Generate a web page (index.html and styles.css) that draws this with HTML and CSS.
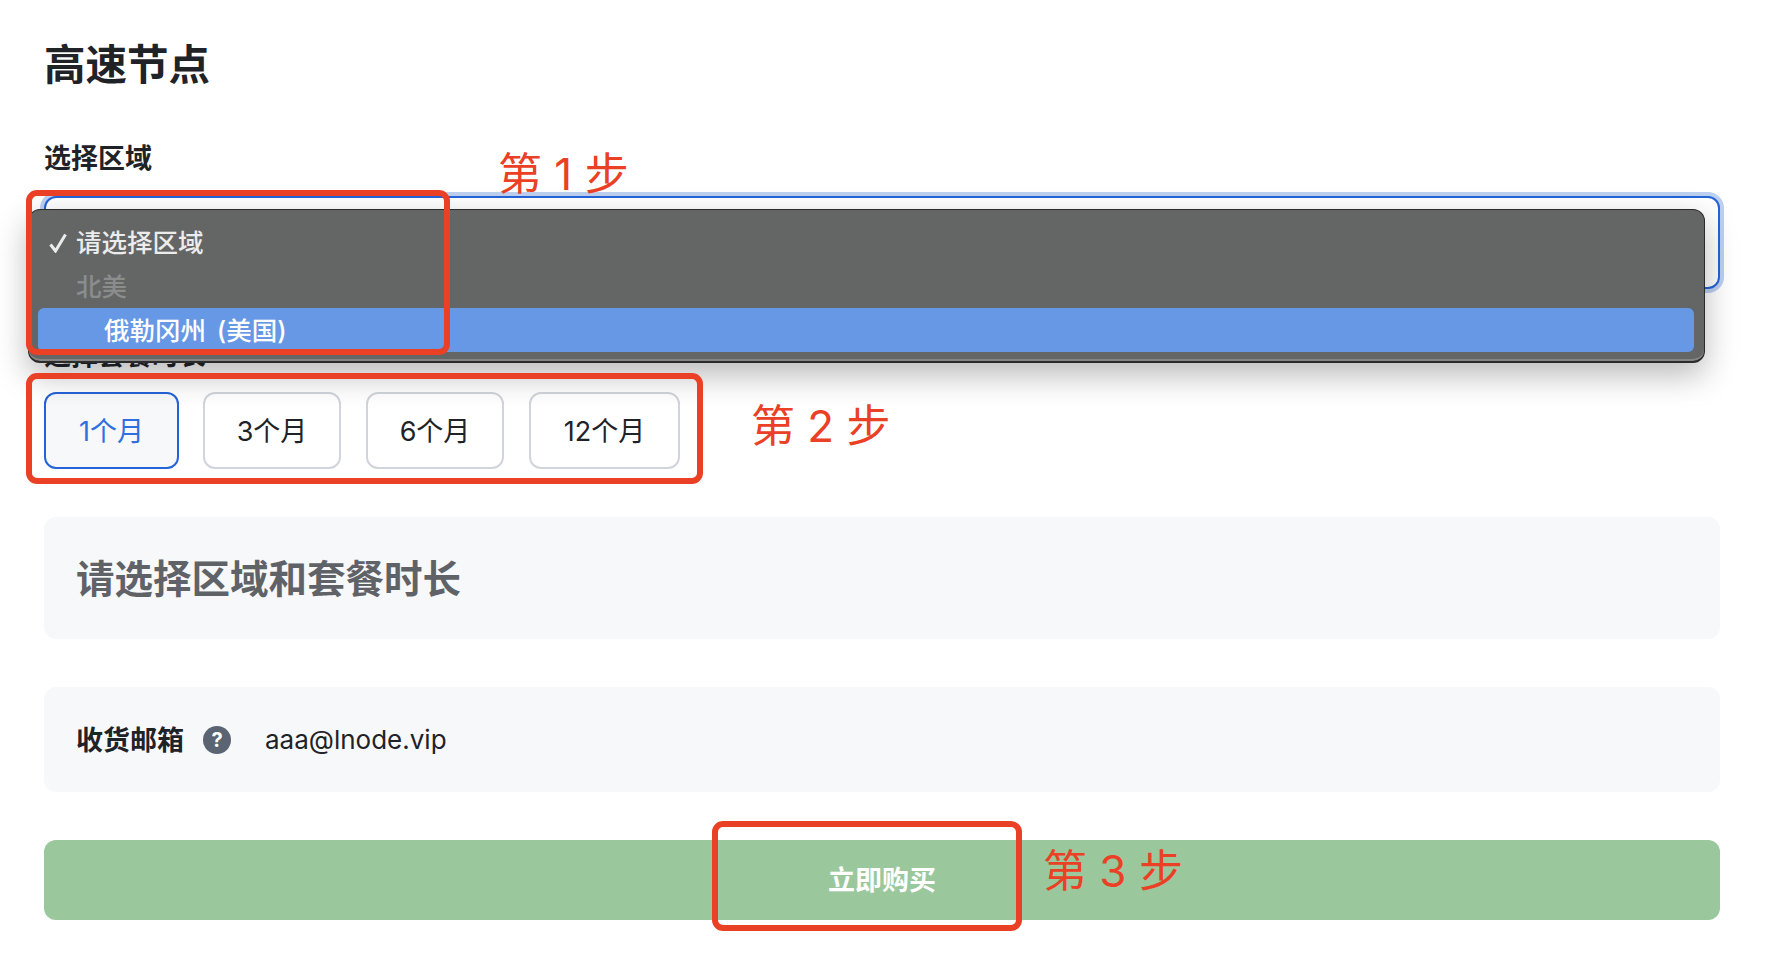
FILE: index.html
```html
<!DOCTYPE html>
<html lang="zh-CN">
<head>
  <meta charset="UTF-8" />
  <title>高速节点</title>
  <link rel="stylesheet" href="styles.css">
</head>
<body>

<main class="page">
  <h1 class="title">高速节点</h1>

  <div class="field-label">选择区域</div>
  <div class="select-box"></div>

  <div class="field-label field-label-plan">选择套餐时长</div>
  <div class="plans">
    <button class="plan plan-active plan-1">1个月</button>
    <button class="plan plan-3">3个月</button>
    <button class="plan plan-6">6个月</button>
    <button class="plan plan-12">12个月</button>
  </div>

  <div class="price-box">请选择区域和套餐时长</div>

  <div class="email-box">
    <span class="email-label">收货邮箱</span>
    <span class="help-icon">?</span>
    <span class="email-value">aaa@lnode.vip</span>
  </div>

  <button class="btn-buy">立即购买</button>
</main>

<!-- menu aberto do select -->
<div class="select-menu">
  <div class="menu-row menu-checked">
    <svg class="menu-check" viewBox="0 0 18 20" width="18" height="20"><path d="M1.5 11.5 L6.5 18 L16.5 1.5" fill="none" stroke="#ececec" stroke-width="3"/></svg>
    请选择区域
  </div>
  <div class="menu-row menu-group">北美</div>
  <div class="menu-row menu-option">俄勒冈州 (美国)</div>
</div>

<!-- anotacoes em vermelho -->
<div class="mark mark-1"></div>
<div class="mark mark-2"></div>
<div class="mark mark-3"></div>
<div class="step step-1">第 1 步</div>
<div class="step step-2">第 2 步</div>
<div class="step step-3">第 3 步</div>

</body>
</html>
```

FILE: styles.css
```css
* { box-sizing: border-box; margin: 0; padding: 0; }
html, body {
  height: 966px;
  overflow: hidden;
}
body {
  font-family: Inter, 'Noto Sans CJK SC', sans-serif;
  background: #fff;
  color: #1f2328;
  position: relative;
}
.page {
  padding: 0 46px 0 44px;
  display: flex;
  flex-direction: column;
}
.title {
  font-size: 41.5px;
  font-weight: 700;
  line-height: 56px;
  margin-top: 37px;
}
.field-label {
  font-size: 27px;
  font-weight: 700;
  line-height: 38px;
  margin-top: 47px;
}
.select-box {
  height: 93px;
  margin-top: 18px;
  border: 2px solid #2563d8;
  border-radius: 12px;
  box-shadow: 0 0 0 4px #bdd0f0;
  background: #fff;
}
.field-label-plan {
  margin-top: 48px;
}
.plans {
  display: flex;
  margin-top: 17px;
}
.plan {
  height: 77px;
  width: 138px;
  margin-right: 25px;
  padding-bottom: 2px;
  background: #fff;
  border: 2px solid #d1d5db;
  border-radius: 12px;
  font-family: inherit;
  font-size: 27px;
  color: #1f2328;
}
.plan-1 { width: 135px; margin-right: 24px; }
.plan-12 { width: 151px; }
.plan-active {
  border-color: #2563d8;
  background: #f7f8fa;
  color: #2f6fe0;
}
.price-box {
  height: 122px;
  margin-top: 48px;
  padding: 0 0 4px 32px;
  display: flex;
  align-items: center;
  background: #f7f8fa;
  border-radius: 12px;
  font-size: 38.5px;
  font-weight: 700;
  color: #5f6368;
}
.email-box {
  height: 105px;
  margin-top: 48px;
  padding-left: 32px;
  display: flex;
  align-items: center;
  background: #f7f8fa;
  border-radius: 12px;
  font-size: 27px;
}
.email-label {
  font-weight: 700;
  margin-bottom: 2px;
}
.help-icon {
  width: 28px;
  height: 28px;
  margin-left: 19px;
  border-radius: 50%;
  background: #5b6472;
  color: #fff;
  font-size: 20px;
  font-weight: 700;
  display: flex;
  align-items: center;
  justify-content: center;
}
.email-value {
  margin-left: 34px;
  font-size: 26px;
}
.btn-buy {
  height: 80px;
  margin-top: 48px;
  padding-bottom: 4px;
  border: none;
  border-radius: 12px;
  background: #9ac79c;
  color: #fff;
  font-family: inherit;
  font-size: 27px;
  font-weight: 700;
}
.select-menu {
  position: absolute;
  left: 28px;
  top: 209px;
  width: 1677px;
  height: 154px;
  padding: 10px 10px 10px 9px;
  background: #646666;
  border: 1px solid #2b2b2b;
  border-bottom-width: 2px;
  border-radius: 12px;
  box-shadow: 0 12px 32px rgba(0,0,0,0.28), inset 0 -2px 0 #858585;
  font-size: 25.5px;
  font-weight: 500;
  color: #ececec;
}
.menu-row {
  height: 44px;
  line-height: 46px;
  padding-left: 38px;
  position: relative;
}
.menu-check {
  position: absolute;
  left: 11px;
  top: 13px;
}
.menu-group {
  color: #8b8d8d;
}
.menu-option {
  padding-left: 66px;
  background: #6798e5;
  border-radius: 6px;
  color: #fff;
  word-spacing: 4px;
}
.mark {
  position: absolute;
  border: 6px solid #ea4025;
  border-radius: 11px;
}
.mark-1 { left: 26px; top: 190px; width: 424px; height: 165px; }
.mark-2 { left: 26px; top: 373px; width: 677px; height: 111px; }
.mark-3 { left: 712px; top: 821px; width: 310px; height: 110px; }
.step {
  position: absolute;
  font-size: 44px;
  line-height: 60px;
  color: #ea4025;
  white-space: nowrap;
}
.step-1 { left: 498px; top: 144px; }
.step-2 { left: 751px; top: 396px; }
.step-3 { left: 1043px; top: 841px; }
```
